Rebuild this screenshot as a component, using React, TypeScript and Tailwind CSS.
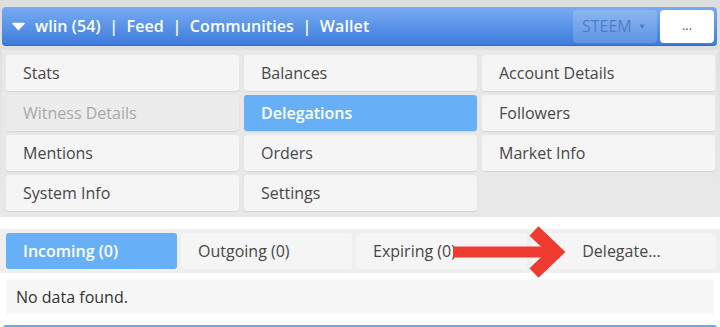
import { ChevronDown } from 'lucide-react'

const MENU = [
  { label: 'Stats' },
  { label: 'Balances' },
  { label: 'Account Details' },
  { label: 'Witness Details', disabled: true },
  { label: 'Delegations', active: true },
  { label: 'Followers' },
  { label: 'Mentions' },
  { label: 'Orders' },
  { label: 'Market Info' },
  { label: 'System Info' },
  { label: 'Settings' },
]

const TABS = [
  { label: 'Incoming (0)', active: true },
  { label: 'Outgoing (0)' },
  { label: 'Expiring (0)' },
]

export default function App() {
  return (
    <div className="w-[720px] h-[327px] overflow-hidden bg-white text-[16px] text-[#444] font-['Open_Sans',sans-serif] relative">
      {/* header + menu */}
      <div className="bg-gradient-to-b from-[#dedede] to-[#e9e9e9] pt-[7px] pl-[2px] pr-[3px]">
        <div className="h-[39px] flex items-center rounded-[4px] border-b border-[#3569c0] bg-gradient-to-b from-[#78acf3] to-[#3d7cdb] pl-[10px] pr-[3px]">
          <svg width="13" height="9" viewBox="0 0 13 9" className="mr-[10px]">
            <path d="M1 1.5 L12 1.5 L6.5 7.5 Z" fill="#fff" stroke="#fff" strokeLinejoin="round" strokeWidth="1.5" />
          </svg>
          <div className="text-white font-semibold tracking-[0.1px] whitespace-pre">
            wlin (54)  |  Feed  |  Communities  |  Wallet
          </div>
          <div className="ml-auto flex items-center gap-[3px]">
            <div className="w-[84px] h-[33px] rounded-[4px] bg-[#ffffff2a] flex items-center pl-[9px] text-[#4f7ec9]">
              <span>STEEM</span>
              <span className="ml-auto mr-[11px] text-[8px]">▼</span>
            </div>
            <div className="w-[54px] h-[33px] rounded-[4px] bg-white flex items-center justify-center text-[#555] text-[13px]">
              ...
            </div>
          </div>
        </div>
        <div className="mt-[4px] bg-[#e8e8e8] pt-[5px] pb-[6px] pl-[4px] grid grid-cols-[233px_233px_233px] gap-x-[5px] gap-y-[4px]">
          {MENU.map(m => (
            <div
              key={m.label}
              className={`h-[36px] rounded-[3px] flex items-center pl-[17px] shadow-[0_1px_1px_rgba(0,0,0,0.08)] ${
                m.active
                  ? 'bg-[#67aff7] text-white font-semibold'
                  : m.disabled
                    ? 'bg-[#ececec] text-[#a9a9a9]'
                    : 'bg-[#f5f5f5] text-[#474747]'
              }`}
            >
              {m.label}
            </div>
          ))}
        </div>
      </div>

      {/* tabs */}
      <div className="mt-[12px] bg-[#efefef] py-[4px] pl-[6px] pr-[4px] flex gap-[4px]">
        {TABS.map(t => (
          <div
            key={t.label}
            className={`w-[171px] h-[36px] rounded-[3px] flex items-center pl-[17px] ${
              t.active ? 'bg-[#67aff7] text-white font-semibold' : 'bg-[#f5f5f5] text-[#474747]'
            }`}
          >
            {t.label}
          </div>
        ))}
        <div className="flex-1 h-[36px] rounded-[3px] bg-[#f5f5f5] text-[#474747] flex items-center justify-center pr-[4px]">
          Delegate...
        </div>
      </div>

      <div className="mt-[6px] mx-[6px] h-[35px] bg-[#f7f7f7] flex items-center pl-[10px] text-[#333]">
        No data found.
      </div>

      <div className="mt-[11px] mx-[3px] h-[4px] rounded-t-[3px] bg-[#6ca6f0]" />

      {/* annotation arrow */}
      <svg className="absolute left-0 top-0 pointer-events-none" width="720" height="327" viewBox="0 0 720 327">
        <line x1="453" y1="252" x2="552" y2="252" stroke="#ef3b2f" strokeWidth="11" />
        <polyline points="534,231 556,252 534,273" fill="none" stroke="#ef3b2f" strokeWidth="13" strokeLinejoin="miter" strokeMiterlimit="10" />
      </svg>
    </div>
  )
}
